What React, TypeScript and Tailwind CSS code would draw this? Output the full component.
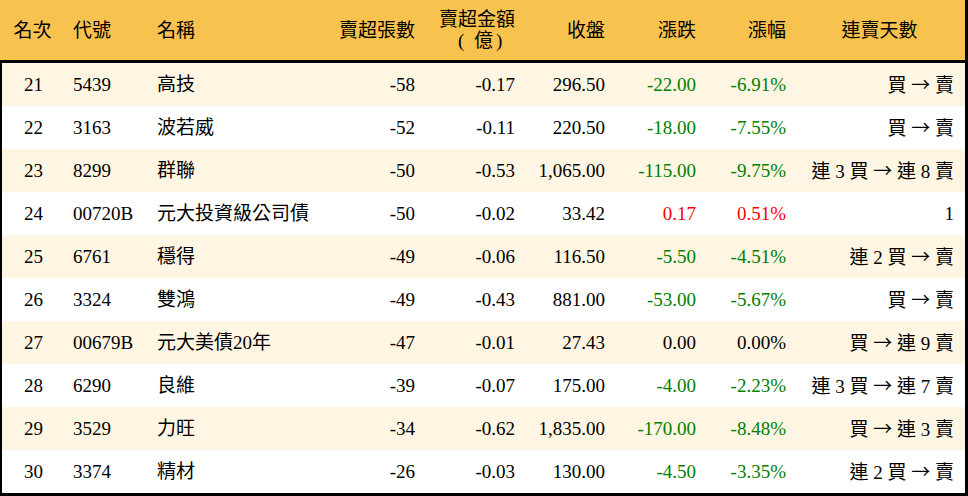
import React from "react";

type Row = {
  rank: number;
  code: string;
  name: string;
  lots: string;
  amount: string;
  close: string;
  change: string;
  pct: string;
  streak: string;
};

const rows: Row[] = [
  { rank: 21, code: "5439", name: "高技", lots: "-58", amount: "-0.17", close: "296.50", change: "-22.00", pct: "-6.91%", streak: "買 → 賣" },
  { rank: 22, code: "3163", name: "波若威", lots: "-52", amount: "-0.11", close: "220.50", change: "-18.00", pct: "-7.55%", streak: "買 → 賣" },
  { rank: 23, code: "8299", name: "群聯", lots: "-50", amount: "-0.53", close: "1,065.00", change: "-115.00", pct: "-9.75%", streak: "連 3 買 → 連 8 賣" },
  { rank: 24, code: "00720B", name: "元大投資級公司債", lots: "-50", amount: "-0.02", close: "33.42", change: "0.17", pct: "0.51%", streak: "1" },
  { rank: 25, code: "6761", name: "穩得", lots: "-49", amount: "-0.06", close: "116.50", change: "-5.50", pct: "-4.51%", streak: "連 2 買 → 賣" },
  { rank: 26, code: "3324", name: "雙鴻", lots: "-49", amount: "-0.43", close: "881.00", change: "-53.00", pct: "-5.67%", streak: "買 → 賣" },
  { rank: 27, code: "00679B", name: "元大美債20年", lots: "-47", amount: "-0.01", close: "27.43", change: "0.00", pct: "0.00%", streak: "買 → 連 9 賣" },
  { rank: 28, code: "6290", name: "良維", lots: "-39", amount: "-0.07", close: "175.00", change: "-4.00", pct: "-2.23%", streak: "連 3 買 → 連 7 賣" },
  { rank: 29, code: "3529", name: "力旺", lots: "-34", amount: "-0.62", close: "1,835.00", change: "-170.00", pct: "-8.48%", streak: "買 → 連 3 賣" },
  { rank: 30, code: "3374", name: "精材", lots: "-26", amount: "-0.03", close: "130.00", change: "-4.50", pct: "-3.35%", streak: "連 2 買 → 賣" },
];

// 漲跌顏色：負綠、正紅、零黑
function tone(v: string) {
  if (v.startsWith("-")) return "text-[#008000]";
  if (/^0(\.0+)?%?$/.test(v)) return "text-black";
  return "text-[#ff0000]";
}

// 箭頭用全形字型畫寬一點
function Streak({ text }: { text: string }) {
  const parts = text.split("→");
  return (
    <>
      {parts.map((p, i) => (
        <React.Fragment key={i}>
          {i > 0 && (
            <span style={{ fontFamily: '"Noto Sans CJK TC", sans-serif' }}>→</span>
          )}
          {p}
        </React.Fragment>
      ))}
    </>
  );
}

export default function App() {
  return (
    <div
      className="w-[968px] h-[496px] bg-white text-black text-[19px] leading-none overflow-hidden"
      style={{ fontFamily: '"Liberation Serif", "Noto Sans CJK TC", serif' }}
    >
      {/* Header */}
      <div className="grid grid-cols-[65px_84px_151px_123px_100px_90px_91px_90px_171px] h-[63px] bg-[#f8c24f] border-r-[3px] border-b-[3px] border-black items-center">
        <div className="text-center">名次</div>
        <div className="pl-2">代號</div>
        <div className="pl-2">名稱</div>
        <div className="pr-2 text-right">賣超張數</div>
        <div className="pr-2 text-right leading-[21px]">
          <div>賣超金額</div>
          <div>
            <span className="inline-block w-[16px] text-left">(</span>億<span className="inline-block w-[22px] pl-[3px] text-left">)</span>
          </div>
        </div>
        <div className="pr-2 text-right">收盤</div>
        <div className="pr-2 text-right">漲跌</div>
        <div className="pr-2 text-right">漲幅</div>
        <div className="text-center">連賣天數</div>
      </div>

      {/* Body */}
      <div className="border-l-2 border-r-[3px] border-b-[3px] border-black">
        {rows.map((r, i) => (
          <div
            key={r.rank}
            className={`grid grid-cols-[63px_84px_151px_123px_100px_90px_91px_90px_171px] h-[43px] items-center ${
              i % 2 === 0 ? "bg-[#fef5e2]" : "bg-white"
            }`}
          >
            <div className="text-center">{r.rank}</div>
            <div className="pl-2">{r.code}</div>
            <div className="pl-2 whitespace-nowrap">{r.name}</div>
            <div className="pr-2 text-right">{r.lots}</div>
            <div className="pr-2 text-right">{r.amount}</div>
            <div className="pr-2 text-right">{r.close}</div>
            <div className={`pr-2 text-right ${tone(r.change)}`}>{r.change}</div>
            <div className={`pr-2 text-right ${tone(r.pct)}`}>{r.pct}</div>
            <div className="pr-[11px] text-right whitespace-nowrap">
              <Streak text={r.streak} />
            </div>
          </div>
        ))}
      </div>
    </div>
  );
}
